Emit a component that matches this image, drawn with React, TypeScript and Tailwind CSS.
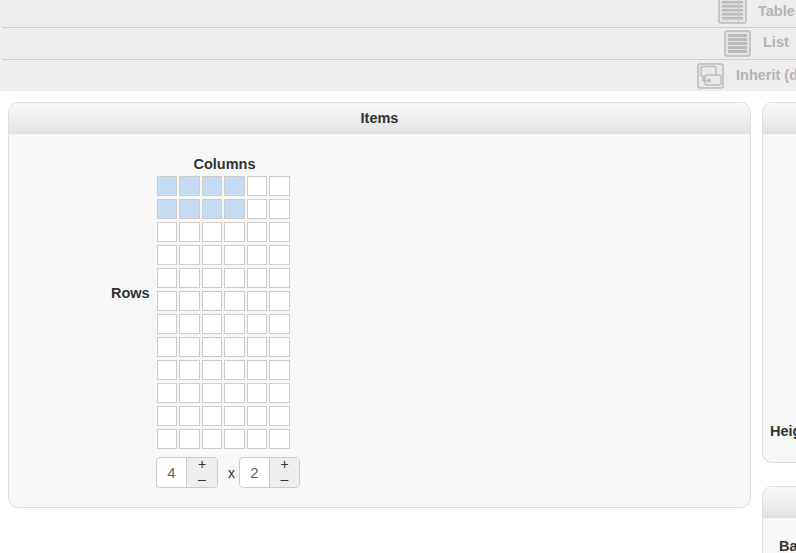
const COLS = [0, 1, 2, 3, 4, 5];
const ROWS = [0, 1, 2, 3, 4, 5, 6, 7, 8, 9, 10, 11];

function TableIcon() {
  return (
    <svg width="29" height="25" viewBox="0 0 29 25" className="shrink-0 self-start">
      <rect x="1" y="-3" width="27" height="26" rx="2" fill="#e4e4e4" stroke="#bcbcbc" strokeWidth="1.5" />
      {[1, 5, 9, 13, 17].map((y) => (
        <rect key={y} x="4" y={y} width="21" height="2.5" fill="#bbbbbb" />
      ))}
      <rect x="8" y="0" width="1" height="21" fill="#c8c8c8" />
      <rect x="20" y="0" width="1" height="21" fill="#c8c8c8" />
    </svg>
  );
}

function ListIcon() {
  return (
    <svg width="28" height="27" viewBox="0 0 28 27" className="shrink-0">
      <rect x="1" y="1" width="25" height="25" rx="2" fill="#e4e4e4" stroke="#bcbcbc" strokeWidth="1.5" />
      {[4, 8, 12, 16, 20].map((y) => (
        <rect key={y} x="4" y={y} width="19" height="3" fill="#bababa" />
      ))}
    </svg>
  );
}

function InheritIcon() {
  return (
    <svg width="28" height="26" viewBox="0 0 28 26" className="shrink-0" fill="none" stroke="#bcbcbc" strokeWidth="1.5">
      <rect x="1" y="1" width="25" height="24" rx="2" fill="#e9e9e9" />
      <rect x="4" y="3.5" width="15" height="10" rx="2" />
      <rect x="8" y="12" width="16" height="10" rx="2" fill="#e9e9e9" />
      <path d="M6 13.5v4h4" />
      <circle cx="12" cy="17.5" r="1.2" fill="#bcbcbc" />
    </svg>
  );
}

function Stepper(props: { value: number; width: string }) {
  return (
    <div className={`flex h-[31px] ${props.width} bg-white border border-[#cccccc] rounded-[4px] overflow-hidden`}>
      <div className="w-[30px] shrink-0 flex items-center justify-center border-r border-[#cccccc] text-[15px] text-[#666666]">
        {props.value}
      </div>
      <div className="flex-1 flex flex-col items-center justify-center bg-[#eeeeee] text-[#333333] text-sm leading-[15px] pb-[2px]">
        <span>+</span>
        <span>–</span>
      </div>
    </div>
  );
}

function PanelHeader(props: { title?: string }) {
  return (
    <div className="h-[31px] flex items-center justify-center pt-[2px] bg-gradient-to-b from-[#f8f8f8] to-[#e4e4e4] border-b border-[#dddddd] text-[14.5px] font-bold text-[#333333]">
      {props.title}
    </div>
  );
}

export default function App() {
  return (
    <div className="w-[796px] h-[553px] overflow-hidden bg-white font-['Liberation_Sans',Arial,sans-serif]">
      <div className="flex items-center h-[28px] pl-[718px] gap-[11px] bg-[#ededed] border-b border-[#cfcfcf] rounded-bl-[4px] overflow-hidden">
        <TableIcon />
        <span className="text-[14.5px] font-bold text-[#b5b5b5] whitespace-nowrap mb-[4px]">Table</span>
      </div>
      <div className="flex items-center h-[32px] pl-[724px] gap-[11px] bg-[#ededed] border-b border-[#cfcfcf] rounded-bl-[4px] overflow-hidden">
        <ListIcon />
        <span className="text-[14.5px] font-bold text-[#b5b5b5] whitespace-nowrap mb-[2px]">List</span>
      </div>
      <div className="flex items-center h-[31px] pl-[697px] gap-[11px] bg-[#ededed] overflow-hidden">
        <InheritIcon />
        <span className="text-[14.5px] font-bold text-[#b5b5b5] whitespace-nowrap">Inherit (default)</span>
      </div>

      <div className="flex items-start gap-[11px] pl-[8px] pt-[11px]">
        <div className="w-[743px] h-[406px] shrink-0 bg-[#f7f7f7] border border-[#dddddd] rounded-[10px] overflow-hidden">
          <PanelHeader title="Items" />
          <div className="flex items-start pl-[102px]">
            <div className="w-[46px] h-[320px] flex items-center text-[14.5px] font-bold text-[#333333]">Rows</div>
            <div className="w-[133px] pt-[21px]">
              <div className="h-[21px] pl-[2px] text-center text-[14.5px] leading-[18px] font-bold text-[#333333]">Columns</div>
              <div className="grid grid-cols-[20px_21px_20px_21px_20px_21px] gap-x-[2px] gap-y-[3px]">
                {ROWS.map((r) =>
                  COLS.map((c) => (
                    <div
                      key={`${r}-${c}`}
                      className={`h-[20px] border border-[#cccccc] ${r < 2 && c < 4 ? "bg-[#c6dcf3]" : "bg-white"}`}
                    />
                  ))
                )}
              </div>
              <div className="flex items-center mt-[8px] ml-[-1px] w-[150px] text-sm text-[#333333]">
                <Stepper value={4} width="w-[62px]" />
                <span className="w-[21px] text-center pl-[6px]">x</span>
                <Stepper value={2} width="w-[61px]" />
              </div>
            </div>
          </div>
        </div>

        <div className="flex-1 flex flex-col gap-[23px]">
          <div className="h-[361px] w-[60px] bg-[#f7f7f7] border border-[#dddddd] rounded-l-[10px] border-r-0 overflow-hidden flex flex-col">
            <PanelHeader />
            <div className="mt-auto pb-[19px] pl-[7px] text-[14.5px] font-bold text-[#333333] whitespace-nowrap">Height</div>
          </div>
          <div className="h-[80px] w-[60px] bg-[#f7f7f7] border border-[#dddddd] rounded-l-[10px] border-r-0 overflow-hidden">
            <PanelHeader />
            <div className="pl-[16px] pt-[18px] text-[14.5px] font-bold text-[#333333] whitespace-nowrap">Background</div>
          </div>
        </div>
      </div>
    </div>
  );
}
